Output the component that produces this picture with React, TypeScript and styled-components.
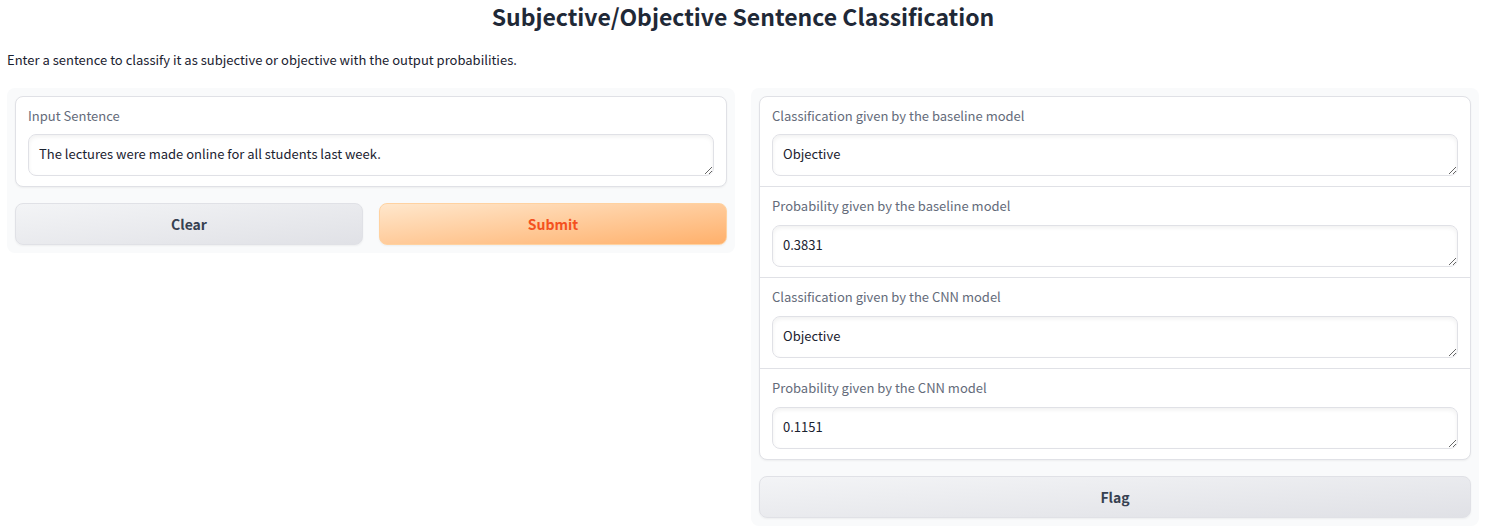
import React, { useId, useState } from "react";
import styled, { createGlobalStyle, css } from "styled-components";

const GlobalStyle = createGlobalStyle`
  *, *::before, *::after { box-sizing: border-box; }
  body {
    margin: 0;
    background: #ffffff;
    color: #1a2230;
    font-family: "Source Sans Pro", "Noto Sans CJK SC", "Open Sans", sans-serif;
    font-size: 13px;
    line-height: 20px;
  }
`;

const Page = styled.main`
  padding: 0 7px 7px;
`;

const Title = styled.h1`
  margin: 0 0 18px;
  color: #1f2937;
  font-size: 23px;
  line-height: 32px;
  font-weight: 700;
  text-align: center;
`;

const Description = styled.p`
  margin: 0 0 18px;
`;

const Columns = styled.div`
  display: flex;
  align-items: flex-start;
  gap: 16px;
`;

const Panel = styled.section`
  flex: 1;
  min-width: 0;
  display: flex;
  flex-direction: column;
  gap: 16px;
  padding: 8px;
  border-radius: 8px;
  background: #f9fafb;
`;

const FieldGroup = styled.div`
  overflow: hidden;
  border: 1px solid #e0e1e6;
  border-radius: 8px;
  background: #ffffff;
  box-shadow: 0 1px 2px rgba(0, 0, 0, 0.05);
`;

const FieldRow = styled.div`
  display: flex;
  flex-direction: column;
  gap: 8px;
  padding: 9px 12px 10px;

  & + & {
    gap: 9px;
    border-top: 1px solid #e0e1e6;
  }
`;

const Label = styled.label`
  color: #646b7a;
`;

const TextArea = styled.textarea`
  display: block;
  width: 100%;
  height: 42px;
  padding: 9px 10px;
  border: 1px solid #e0e1e6;
  border-radius: 8px;
  outline: none;
  overflow: hidden;
  resize: vertical;
  background: #ffffff;
  box-shadow: inset 0 2px 4px rgba(0, 0, 0, 0.06);
  color: inherit;
  font: inherit;
`;

const Actions = styled.div`
  display: flex;
  gap: 16px;
`;

const primary = css`
  border-color: #ffd2a1;
  background: linear-gradient(to bottom right, #ffe7cc, #ffb06b);
  color: #f4511e;
`;

const secondary = css`
  border-color: #e0e1e6;
  background: linear-gradient(to bottom right, #f3f4f6, #e0e1e6);
  color: #374151;
`;

const Button = styled.button<{ $primary?: boolean }>`
  flex: 1;
  height: 42px;
  padding: 0 16px;
  border: 1px solid;
  border-radius: 8px;
  box-shadow: 0 1px 2px rgba(0, 0, 0, 0.05);
  font-family: inherit;
  font-size: 14px;
  line-height: 24px;
  font-weight: 700;
  cursor: pointer;
  ${({ $primary }) => ($primary ? primary : secondary)}
`;

type FieldProps = {
  label: string;
  value: string;
  onChange?: (value: string) => void;
};

function Field({ label, value, onChange }: FieldProps) {
  const id = useId();
  return (
    <FieldRow>
      <Label htmlFor={id}>{label}</Label>
      <TextArea
        id={id}
        rows={1}
        value={value}
        readOnly={!onChange}
        onChange={(event) => onChange?.(event.target.value)}
      />
    </FieldRow>
  );
}

const results = [
  { label: "Classification given by the baseline model", value: "Objective" },
  { label: "Probability given by the baseline model", value: "0.3831" },
  { label: "Classification given by the CNN model", value: "Objective" },
  { label: "Probability given by the CNN model", value: "0.1151" },
];

export default function App() {
  const [sentence, setSentence] = useState(
    "The lectures were made online for all students last week."
  );

  return (
    <>
      <GlobalStyle />
      <Page>
        <Title>Subjective/Objective Sentence Classification</Title>
        <Description>
          Enter a sentence to classify it as subjective or objective with the output probabilities.
        </Description>
        <Columns>
          <Panel>
            <FieldGroup>
              <Field label="Input Sentence" value={sentence} onChange={setSentence} />
            </FieldGroup>
            <Actions>
              <Button type="button" onClick={() => setSentence("")}>Clear</Button>
              <Button type="button" $primary>Submit</Button>
            </Actions>
          </Panel>
          <Panel>
            <FieldGroup>
              {results.map((result) => (
                <Field key={result.label} {...result} />
              ))}
            </FieldGroup>
            <Actions>
              <Button type="button">Flag</Button>
            </Actions>
          </Panel>
        </Columns>
      </Page>
    </>
  );
}
